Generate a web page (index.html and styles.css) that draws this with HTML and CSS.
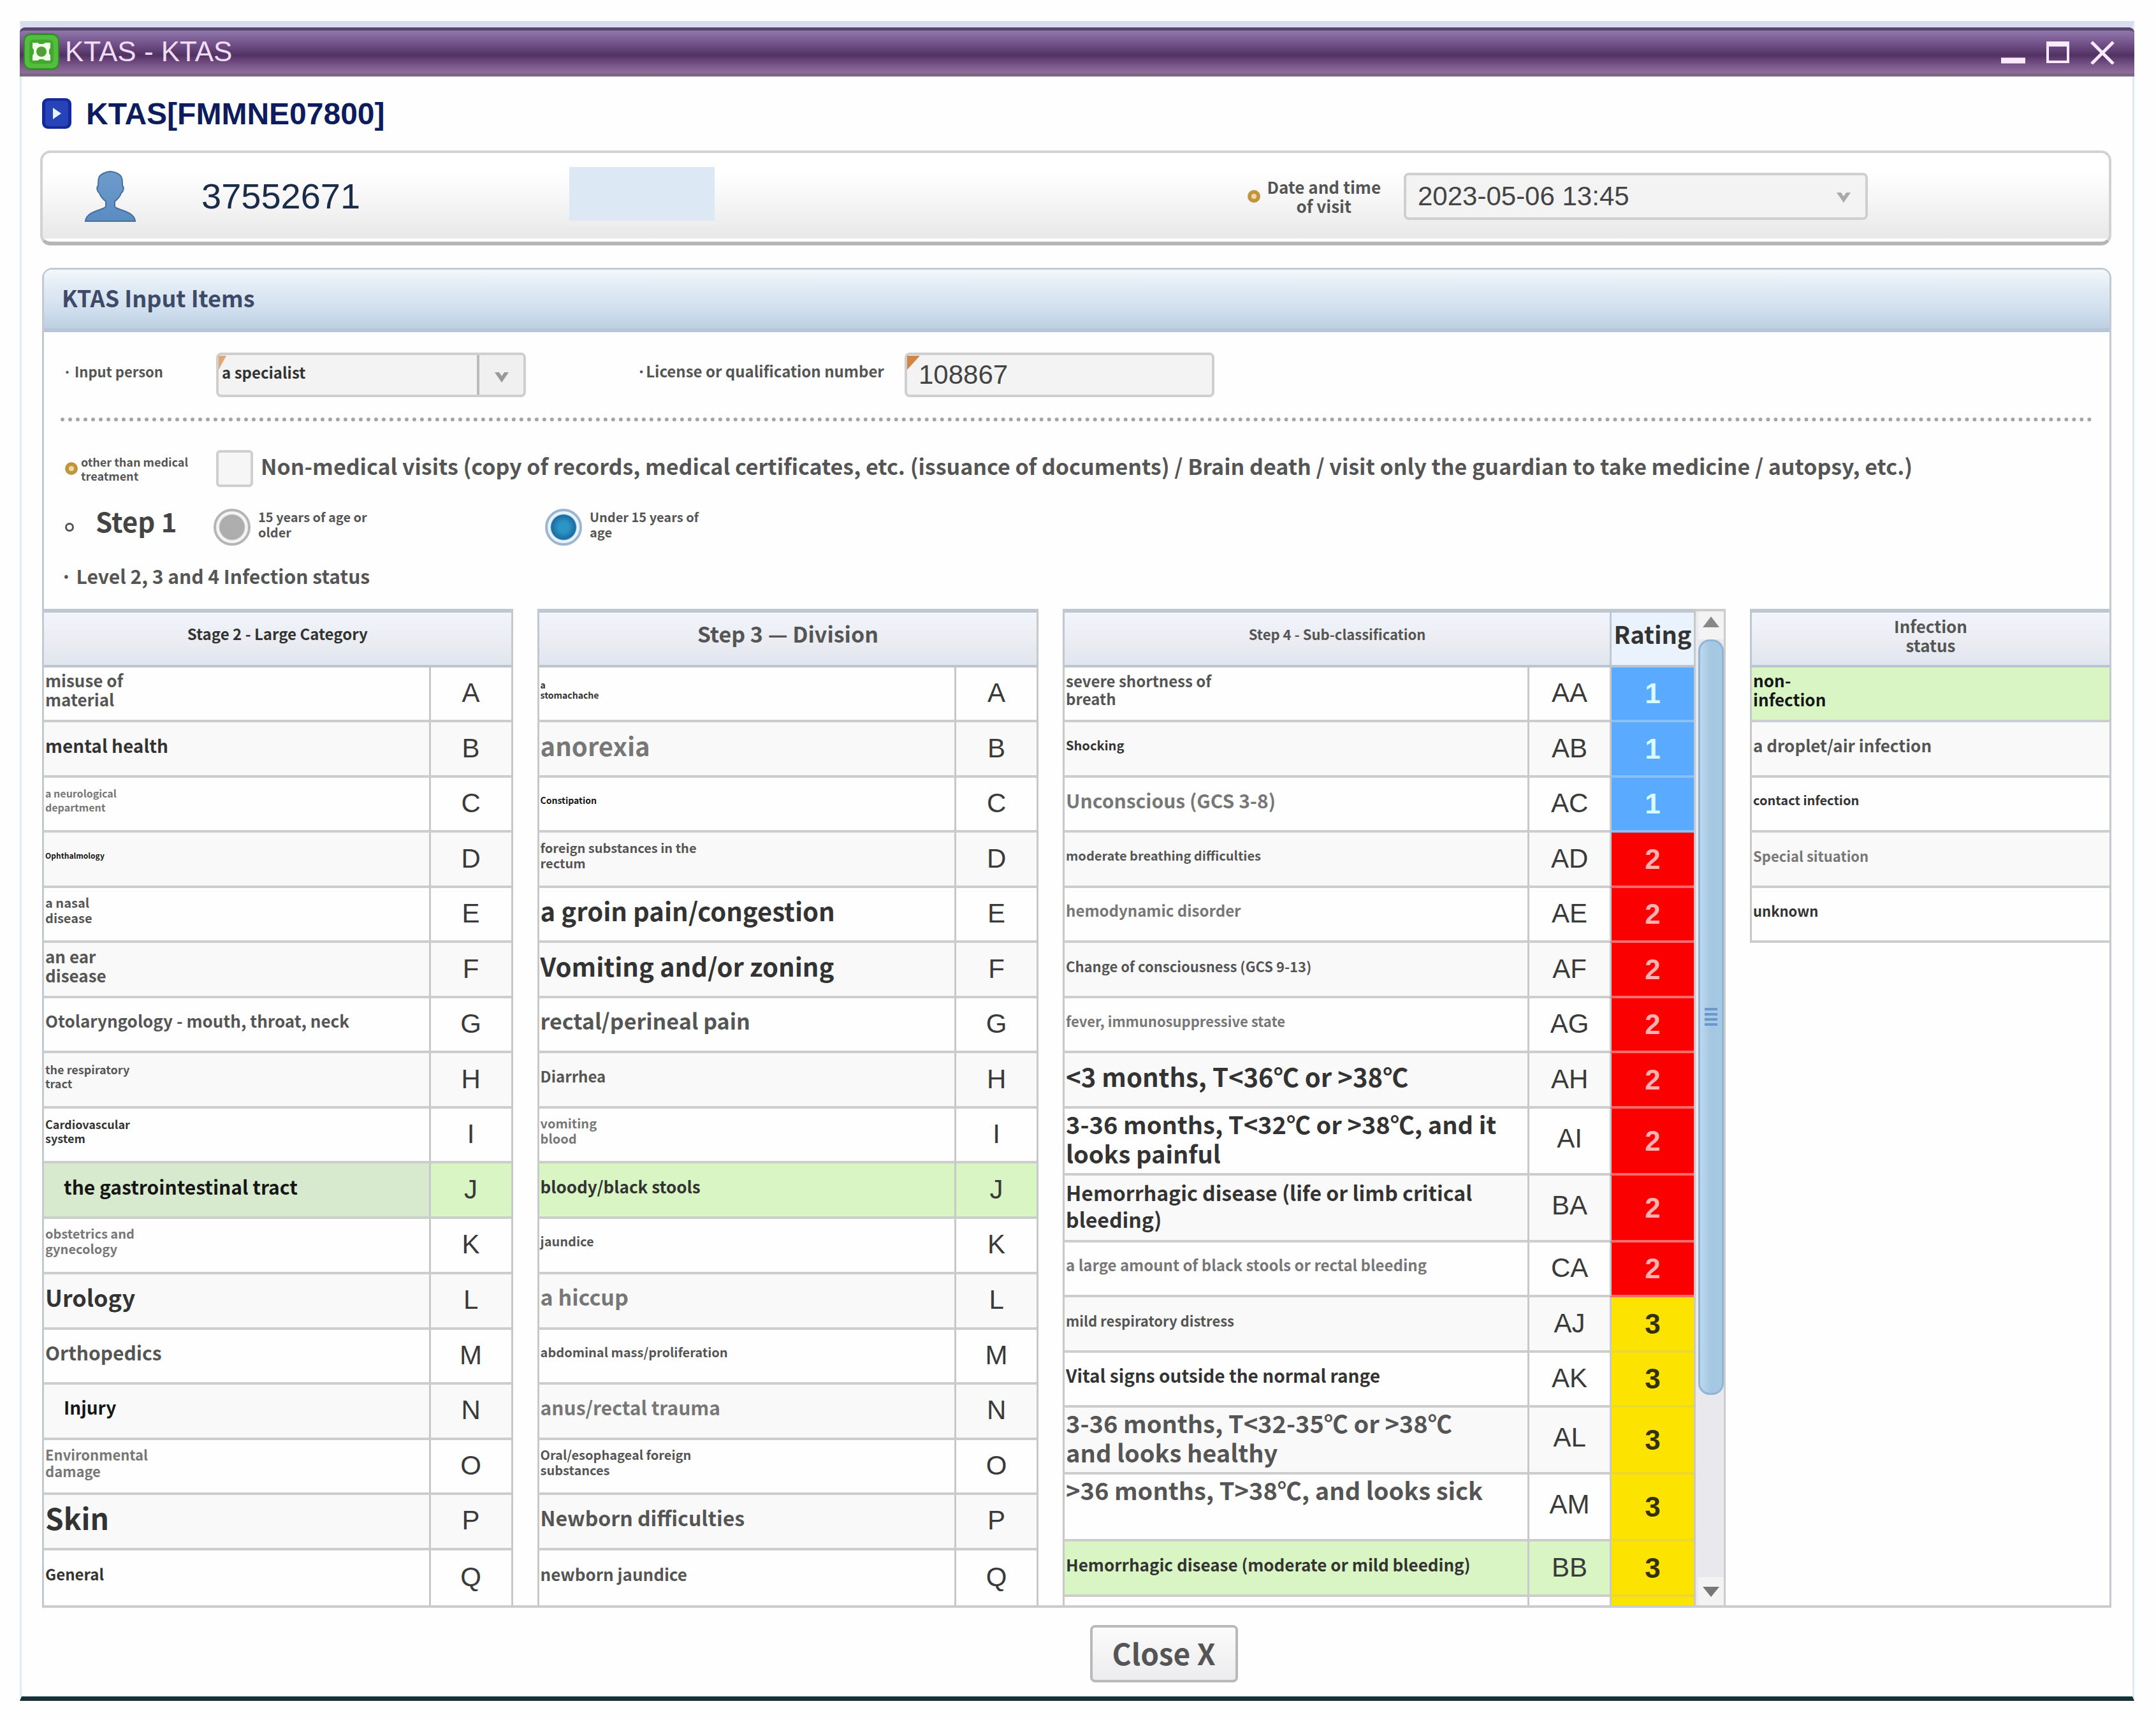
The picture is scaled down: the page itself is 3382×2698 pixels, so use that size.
FILE: index.html
```html
<!DOCTYPE html>
<html lang="en">
<head>
    <meta charset="UTF-8">
    <meta name="viewport" content="width=device-width, initial-scale=1.0">
    <title>KTAS - KTAS</title>
    <link rel="stylesheet" href="styles.css">
</head>
<body>
<div class="window">
    <!-- Title bar -->
    <header class="titlebar">
        <svg class="app-icon" viewBox="0 0 58 60">
            <rect x="1" y="1" width="56" height="58" rx="12" fill="#2f8f22"/>
            <rect x="3" y="4" width="52" height="52" rx="9" fill="#52bd3e"/>
            <rect x="10" y="11" width="38" height="38" rx="7" fill="#43a82f"/>
            <path d="M15 16h8l3 2h6l3-2h8v8l-2 3v6l2 3v8h-8l-3-2h-6l-3 2h-8v-8l2-3v-6l-2-3z" fill="#f2ffe9"/>
            <circle cx="29" cy="30" r="8" fill="#43a82f"/>
            <circle cx="29" cy="30" r="4" fill="#6b8f4a"/>
        </svg>
        <span class="titlebar-text">KTAS - KTAS</span>
        <div class="window-buttons">
            <button type="button" aria-label="Minimize"><svg viewBox="0 0 40 40"><path d="M1 34h38" stroke="#fbeaff" stroke-width="9"/></svg></button>
            <button type="button" aria-label="Maximize"><svg viewBox="0 0 40 40"><path d="M4 6v30h32V6" fill="none" stroke="#fbeaff" stroke-width="4"/><path d="M2 8h36" stroke="#fbeaff" stroke-width="8"/></svg></button>
            <button type="button" aria-label="Close"><svg viewBox="0 0 40 40"><path d="M3 5l34 34M37 5L3 39" stroke="#fbeaff" stroke-width="5"/></svg></button>
        </div>
    </header>

    <main class="content">
        <h1 class="page-title">
            <svg viewBox="0 0 48 50">
                <rect x="1" y="1" width="46" height="48" rx="9" fill="#16299b"/>
                <rect x="6" y="5" width="36" height="40" rx="5" fill="#2743b8"/>
                <path d="M18 16l13 9-13 9z" fill="#e6f4ff"/>
            </svg>
            KTAS[FMMNE07800]
        </h1>

        <!-- Patient bar -->
        <section class="patient">
            <svg class="person" viewBox="0 0 80 82">
                <defs>
                    <linearGradient id="skin" x1="0" y1="0" x2="0" y2="1">
                        <stop offset="0" stop-color="#6f9bcc"/>
                        <stop offset="1" stop-color="#5a8cc2"/>
                    </linearGradient>
                </defs>
                <path d="M40 2c-6 0-16 4-18 10-1 4-1 9-1 12-3 3-2 9 2 12 2 6 6 10 10 13v8c-3 6-29 6-32 22v1h78v-1c-3-16-29-16-32-22v-8c4-3 8-7 10-13 4-3 5-9 2-12 0-3 0-8-1-12C56 6 46 2 40 2z" fill="url(#skin)" stroke="#46719f" stroke-width="2"/>
            </svg>
            <span class="patient-id">37552671</span>
            <span class="patient-name"></span>
            <span class="ring"></span>
            <label class="visit-label" for="visit">Date and time<br>of visit</label>
            <span class="field visit-field">
                <select id="visit"><option>2023-05-06 13:45</option></select>
                <svg class="arrow" viewBox="0 0 24 20"><path d="M1 3h7l4 6 4-6h7L12 19z" fill="#aaa"/></svg>
            </span>
        </section>

        <section class="panel">
            <h2 class="panel-title">KTAS Input Items</h2>

            <div class="form">
                <div class="form-row person-row">
                    <label class="t22 row-label" for="inputPerson">· Input person</label>
                    <span class="field split required-thin">
                        <select class="t24" id="inputPerson"><option>a specialist</option></select>
                        <svg class="arrow" viewBox="0 0 24 20"><path d="M1 3h7l4 6 4-6h7L12 19z" fill="#999"/></svg>
                    </span>
                    <label class="t24 license-label" for="license">·License or qualification number</label>
                    <span class="field required">
                        <input type="text" id="license" value="108867">
                    </span>
                </div>

                <div class="form-row other-row">
                    <span class="row-label with-ring t18"><span class="ring"></span><span>other than medical<br>treatment</span></span>
                    <input type="checkbox" id="nonMedical">
                    <label class="t34" for="nonMedical">Non-medical visits (copy of records, medical certificates, etc. (issuance of documents) / Brain death / visit only the guardian to take medicine / autopsy, etc.)</label>
                </div>

                <div class="form-row step-row">
                    <span class="row-label with-ring"><span class="ring small"></span><span class="step-name">Step 1</span></span>
                    <span class="choice">
                        <input type="radio" name="age" id="age15">
                        <label class="t20" for="age15">15 years of age or<br>older</label>
                    </span>
                    <span class="choice">
                        <input type="radio" name="age" id="ageUnder" checked>
                        <label class="t20" for="ageUnder">Under 15 years of<br>age</label>
                    </span>
                </div>

                <p class="level-text t30">· Level 2, 3 and 4 Infection status</p>
            </div>

            <div class="tables">
                <!-- Stage 2 -->
                <table class="grid full first">
                    <colgroup><col><col class="code-col"></colgroup>
                    <thead><tr><th class="t24 dark" colspan="2">Stage 2 - Large Category</th></tr></thead>
                    <tbody>
                        <tr><td class="t26">misuse of<br>material</td><td class="code">A</td></tr>
                        <tr><td class="t28 dark">mental health</td><td class="code">B</td></tr>
                        <tr><td class="t16 light">a neurological<br>department</td><td class="code">C</td></tr>
                        <tr><td class="t12 black">Ophthalmology</td><td class="code">D</td></tr>
                        <tr><td class="t20">a nasal<br>disease</td><td class="code">E</td></tr>
                        <tr><td class="t26">an ear<br>disease</td><td class="code">F</td></tr>
                        <tr><td class="t26">Otolaryngology - mouth, throat, neck</td><td class="code">G</td></tr>
                        <tr><td class="t18">the respiratory<br>tract</td><td class="code">H</td></tr>
                        <tr><td class="t18 dark">Cardiovascular<br>system</td><td class="code">I</td></tr>
                        <tr class="picked"><td class="t30 black indent">the gastrointestinal tract</td><td class="code">J</td></tr>
                        <tr><td class="t20 light">obstetrics and<br>gynecology</td><td class="code">K</td></tr>
                        <tr><td class="t36 dark">Urology</td><td class="code">L</td></tr>
                        <tr><td class="t30">Orthopedics</td><td class="code">M</td></tr>
                        <tr><td class="t28 black indent">Injury</td><td class="code">N</td></tr>
                        <tr><td class="t22 light">Environmental<br>damage</td><td class="code">O</td></tr>
                        <tr><td class="t46 dark">Skin</td><td class="code">P</td></tr>
                        <tr><td class="t24 dark">General</td><td class="code">Q</td></tr>
                    </tbody>
                </table>

                <!-- Step 3 -->
                <table class="grid full">
                    <colgroup><col><col class="code-col"></colgroup>
                    <thead><tr><th class="t34" colspan="2">Step 3 — Division</th></tr></thead>
                    <tbody>
                        <tr><td class="t14 dark">a<br>stomachache</td><td class="code">A</td></tr>
                        <tr><td class="t40 light">anorexia</td><td class="code">B</td></tr>
                        <tr><td class="t14 black">Constipation</td><td class="code">C</td></tr>
                        <tr><td class="t20">foreign substances in the<br>rectum</td><td class="code">D</td></tr>
                        <tr><td class="t40 dark">a groin pain/congestion</td><td class="code">E</td></tr>
                        <tr><td class="t40 dark">Vomiting and/or zoning</td><td class="code">F</td></tr>
                        <tr><td class="t34">rectal/perineal pain</td><td class="code">G</td></tr>
                        <tr><td class="t24">Diarrhea</td><td class="code">H</td></tr>
                        <tr><td class="t20 light">vomiting<br>blood</td><td class="code">I</td></tr>
                        <tr class="picked"><td class="t26 dark">bloody/black stools</td><td class="code">J</td></tr>
                        <tr><td class="t20">jaundice</td><td class="code">K</td></tr>
                        <tr><td class="t34 light">a hiccup</td><td class="code">L</td></tr>
                        <tr><td class="t20">abdominal mass/proliferation</td><td class="code">M</td></tr>
                        <tr><td class="t30 light">anus/rectal trauma</td><td class="code">N</td></tr>
                        <tr><td class="t20">Oral/esophageal foreign<br>substances</td><td class="code">O</td></tr>
                        <tr><td class="t32">Newborn difficulties</td><td class="code">P</td></tr>
                        <tr><td class="t26">newborn jaundice</td><td class="code">Q</td></tr>
                    </tbody>
                </table>

                <!-- Step 4 with scrollbar -->
                <div class="scroll-box">
                    <table class="grid">
                        <colgroup><col><col class="code-col"><col class="rating-col"></colgroup>
                        <thead><tr><th class="t22" colspan="2">Step 4 - Sub-classification</th><th class="rating-head t38 dark">Rating</th></tr></thead>
                        <tbody>
                            <tr><td class="t24">severe shortness of<br>breath</td><td class="code">AA</td><td class="rate one">1</td></tr>
                            <tr><td class="t20 dark">Shocking</td><td class="code">AB</td><td class="rate one">1</td></tr>
                            <tr><td class="t30 light">Unconscious (GCS 3-8)</td><td class="code">AC</td><td class="rate one">1</td></tr>
                            <tr><td class="t20">moderate breathing difficulties</td><td class="code">AD</td><td class="rate two">2</td></tr>
                            <tr><td class="t24 light">hemodynamic disorder</td><td class="code">AE</td><td class="rate two">2</td></tr>
                            <tr><td class="t22">Change of consciousness (GCS 9-13)</td><td class="code">AF</td><td class="rate two">2</td></tr>
                            <tr><td class="t22 light">fever, immunosuppressive state</td><td class="code">AG</td><td class="rate two">2</td></tr>
                            <tr><td class="t40 dark">&lt;3 months, T&lt;36℃ or &gt;38℃</td><td class="code">AH</td><td class="rate two">2</td></tr>
                            <tr class="tall"><td class="t38 dark">3-36 months, T&lt;32℃ or &gt;38℃, and it<br>looks painful</td><td class="code">AI</td><td class="rate two">2</td></tr>
                            <tr class="tall"><td class="t32 dark">Hemorrhagic disease (life or limb critical<br>bleeding)</td><td class="code">BA</td><td class="rate two">2</td></tr>
                            <tr><td class="t24 light">a large amount of black stools or rectal bleeding</td><td class="code">CA</td><td class="rate two">2</td></tr>
                            <tr><td class="t22">mild respiratory distress</td><td class="code">AJ</td><td class="rate three">3</td></tr>
                            <tr><td class="t28 dark">Vital signs outside the normal range</td><td class="code">AK</td><td class="rate three">3</td></tr>
                            <tr class="tall"><td class="t38">3-36 months, T&lt;32-35℃ or &gt;38℃<br>and looks healthy</td><td class="code">AL</td><td class="rate three">3</td></tr>
                            <tr class="tall"><td class="t38 raised">&gt;36 months, T&gt;38℃, and looks sick</td><td class="code">AM</td><td class="rate three">3</td></tr>
                            <tr class="picked"><td class="t26 dark">Hemorrhagic disease (moderate or mild bleeding)</td><td class="code">BB</td><td class="rate three">3</td></tr>
                            <tr class="cut"><td></td><td></td><td class="rate three"></td></tr>
                        </tbody>
                    </table>
                    <div class="scrollbar">
                        <svg class="scroll-end" viewBox="0 0 40 44"><path d="M20 8l13 17H7z" fill="#888"/></svg>
                        <div class="thumb"><span class="grip"></span></div>
                        <svg class="scroll-end down" viewBox="0 0 40 44"><path d="M20 31L7 15h26z" fill="#777"/></svg>
                    </div>
                </div>

                <!-- Infection -->
                <div class="infection">
                    <table class="grid last">
                        <thead><tr><th class="t26">Infection<br>status</th></tr></thead>
                        <tbody>
                            <tr class="picked"><td class="t26 black">non-<br>infection</td></tr>
                            <tr><td class="t26">a droplet/air infection</td></tr>
                            <tr><td class="t20 dark">contact infection</td></tr>
                            <tr><td class="t22 light">Special situation</td></tr>
                            <tr><td class="t22 dark">unknown</td></tr>
                        </tbody>
                    </table>
                </div>
            </div>
        </section>

        <footer class="actions">
            <button type="button" class="close-button">Close X</button>
        </footer>
    </main>
</div>
</body>
</html>
```
FILE: styles.css
```css
* {
    box-sizing: border-box;
}

body {
    margin: 0;
    padding: 33px 34px 31px 31px;
    background: #fefefe;
    color: #555;
    font-family: "Noto Sans CJK KR", "Noto Sans", sans-serif;
    font-weight: 700;
}

h1, h2, p {
    margin: 0;
}

button, input, select {
    font-family: inherit;
    font-weight: inherit;
    color: inherit;
    margin: 0;
}

/* Text sizes */
.t12 { font-size: 12px; line-height: 16px; }
.t14 { font-size: 14px; line-height: 16px; }
.t16 { font-size: 16px; line-height: 22px; }
.t18 { font-size: 18px; line-height: 22px; }
.t20 { font-size: 20px; line-height: 24px; }
.t22 { font-size: 22px; line-height: 26px; }
.t24 { font-size: 24px; line-height: 28px; }
.t26 { font-size: 26px; line-height: 30px; }
.t28 { font-size: 28px; line-height: 32px; }
.t30 { font-size: 30px; line-height: 34px; }
.t32 { font-size: 32px; line-height: 42px; }
.t34 { font-size: 34px; line-height: 42px; }
.t36 { font-size: 36px; line-height: 44px; }
.t38 { font-size: 38px; line-height: 46px; }
.t40 { font-size: 40px; line-height: 46px; }
.t46 { font-size: 46px; line-height: 52px; }

.dark { color: #333; }
.black { color: #161616; }
.light { color: #777; }

/* Window frame */
.window {
    border: solid #dfeaf2;
    border-width: 0 3px;
    border-bottom: 7px solid #14303a;
    border-top: 10px solid #d9dcec;
}

.titlebar {
    display: flex;
    align-items: center;
    height: 77px;
    margin: 0 -3px;
    padding: 0 30px 2px 5px;
    border-top: 5px solid #57466f;
    border-bottom: 5px solid #7a6682;
    border-radius: 8px 8px 0 0;
    background: linear-gradient(#8f78ab, #74528a 30%, #523263 58%, #7b578c 82%, #8d7099);
}

.app-icon {
    width: 58px;
    height: 60px;
}

.titlebar-text {
    flex: 1;
    padding-left: 8px;
    font-family: "Liberation Sans", Arial, sans-serif;
    font-size: 44px;
    line-height: 50px;
    font-weight: 400;
    color: #f0dcf7;
}

.window-buttons {
    display: flex;
    gap: 30px;
}

.window-buttons button {
    width: 40px;
    height: 40px;
    padding: 0;
    border: 0;
    background: none;
}

.window-buttons svg {
    display: block;
}

.content {
    padding: 0 33px 22px 29px;
}

.page-title {
    display: flex;
    align-items: center;
    gap: 22px;
    height: 116px;
    padding-left: 2px;
    font-family: "Liberation Sans", Arial, sans-serif;
    font-size: 48px;
    color: #0d1c5c;
}

.page-title svg {
    width: 48px;
    height: 50px;
}

/* Patient bar */
.patient {
    display: flex;
    align-items: center;
    height: 149px;
    padding: 0 378px 4px 66px;
    border: 4px solid #d2d2d2;
    border-bottom: 6px solid #b5b5b5;
    border-radius: 16px;
    background: linear-gradient(#fff 20%, #f7f7f7 50%, #e8e8e8 96%, #fff 97%);
}

.person {
    width: 80px;
    height: 82px;
}

.patient-id {
    margin-left: 103px;
    font-family: "Liberation Sans", Arial, sans-serif;
    font-size: 56px;
    font-weight: 400;
    color: #1b2c48;
}

.patient-name {
    width: 228px;
    height: 84px;
    margin: 0 0 8px 328px;
    background: #dde8f5;
}

.ring {
    flex: none;
    width: 20px;
    height: 20px;
    border: 6px solid #c09540;
    border-radius: 50%;
    background: #f0d9a0;
}

.ring.small {
    width: 14px;
    height: 14px;
    border: 3px solid #555;
    background: #fff;
}

.patient .ring {
    margin-left: auto;
}

.visit-label {
    margin: 0 36px 0 10px;
    text-align: center;
    font-size: 26px;
    line-height: 30px;
}

/* Fields */
.field {
    position: relative;
    display: block;
    width: 486px;
    height: 70px;
}

.field select, .field input {
    display: block;
    width: 100%;
    height: 100%;
    border: 4px solid #cfcfcf;
    border-radius: 8px;
    background: #f4f3f4;
    appearance: none;
    outline: 0;
}

.field input, .visit-field select {
    padding: 0 18px;
    font-family: "Liberation Sans", Arial, sans-serif;
    font-size: 42px;
    font-weight: 400;
    color: #444;
}

.visit-field {
    width: 728px;
    height: 74px;
}

.split select {
    padding: 0 0 8px 5px;
    line-height: 44px;
    color: #333;
    background: linear-gradient(90deg, #f4f3f4 405px, #bbb 405px, #bbb 409px, #f0f0f0 409px);
}

.arrow {
    position: absolute;
    right: 26px;
    top: 28px;
    width: 24px;
    height: 20px;
}

/* Orange corner marks a required field */
.required::before, .required-thin::before {
    content: "";
    position: absolute;
    left: 4px;
    top: 5px;
    width: 20px;
    height: 22px;
    background: #cf8745;
    clip-path: polygon(0 0, 100% 0, 0 100%);
}

.required-thin::before {
    width: 12px;
    background: #e0a878;
}

/* Main panel */
.panel {
    margin: 35px 0 0 3px;
    border: 3px solid #c3c9cf;
    border-bottom: 4px solid #ccc;
    border-radius: 16px 16px 0 0;
}

.panel-title {
    height: 98px;
    padding: 0 28px;
    border-bottom: 6px solid #b4c6d8;
    border-radius: 12px 12px 0 0;
    background: linear-gradient(#f2f8fb, #dfe9f4 35%, #cfdeed 70%, #bccfe2);
    font-size: 36px;
    line-height: 86px;
    color: #3d4a68;
}

.form {
    padding: 0 26px;
}

.form-row {
    display: flex;
    align-items: center;
}

.row-label {
    width: 244px;
    flex: none;
}

.person-row {
    height: 140px;
    border-bottom: 6px dotted #a4a4a4;
}

.person-row label {
    padding-bottom: 12px;
}

.person-row .row-label {
    padding-left: 4px;
}

.license-label {
    width: 420px;
    margin-left: 174px;
}

.with-ring {
    display: flex;
    align-items: center;
    gap: 5px;
    padding-left: 7px;
}

.other-row {
    height: 148px;
}

.other-row label {
    padding: 0 0 8px 12px;
}

.form input[type="checkbox"] {
    flex: none;
    width: 58px;
    height: 58px;
    border: 4px solid #cfcfcf;
    border-radius: 6px;
    background: #f6f6f6;
    appearance: none;
}

.step-row {
    height: 36px;
}

.step-row .row-label {
    width: 240px;
}

.step-row .with-ring {
    gap: 34px;
}

.step-name {
    padding-bottom: 20px;
    font-size: 42px;
    line-height: 44px;
    color: #444;
}

.choice {
    display: flex;
    align-items: center;
    gap: 12px;
    width: 520px;
}

.choice label {
    padding-bottom: 8px;
}

.choice input {
    width: 58px;
    height: 58px;
    flex: none;
    border: 4px solid #b5b5b5;
    border-radius: 50%;
    background: radial-gradient(circle, #adadad 19px, #f4f4f4 21px);
    appearance: none;
}

.choice input:checked {
    border-color: #9db5cf;
    background: radial-gradient(circle, #2b95c6 8px, #1b6b9f 19px, #e6f4ff 21px);
}

.level-text {
    padding: 41px 0 35px;
}

/* Classification tables */
.tables {
    display: grid;
    grid-template-columns: 737fr 788fr 1042fr 565fr;
    gap: 38px;
}

.grid {
    width: 100%;
    table-layout: fixed;
    border-collapse: separate;
    border-spacing: 0;
    border-right: 3px solid #c6c8ca;
}

.code-col {
    width: 129px;
}

.rating-col {
    width: 132px;
}

.grid th {
    height: 92px;
    padding: 0 0 16px;
    border-top: 6px solid #bfc8d0;
    border-bottom: 4px solid #bcc5ce;
    border-left: 3px solid #bfc8d0;
    background: linear-gradient(#f1f5fd, #ebedf2 50%, #e0e5ee);
    white-space: nowrap;
}

.grid td {
    height: 86px;
    padding: 0 0 12px 2px;
    border-bottom: 4px solid #cdcdcd;
    border-left: 3px solid #c6c8ca;
    white-space: nowrap;
}

.grid tr:nth-child(even) td {
    height: 87px;
    background: #faf9fa;
}

/* The panel's own border closes these tables */
.full tbody tr:last-child td {
    border-bottom: 0;
}

.first th, .first td:first-child {
    border-left-width: 0;
}

.last {
    border-right: 0;
}

.last th {
    padding-bottom: 10px;
}

.grid td.code {
    padding: 0 0 2px;
    text-align: center;
    font-family: "Liberation Sans", Arial, sans-serif;
    font-size: 42px;
    font-weight: 400;
    line-height: 46px;
    color: #3a3a3a;
}

.grid td.indent {
    padding-left: 31px;
}

.grid tbody tr.picked td {
    background: #d8f5c3;
}

.grid tbody tr.picked td.indent {
    background: #d8eacd;
}

.grid tr.tall td {
    height: 105px;
    padding-bottom: 8px;
}

.grid tr.tall td.raised {
    padding-bottom: 54px;
}

.grid tbody tr.cut td {
    height: 13px;
    padding: 0;
    border-bottom: 0;
}

.grid th.rating-head {
    background: #eaf2fd;
}

.grid tbody tr td.rate {
    padding: 0;
    text-align: center;
    font-family: "Liberation Sans", Arial, sans-serif;
    font-size: 44px;
    font-weight: 700;
    line-height: 46px;
}

.grid tbody tr td.one {
    background: #5aabff;
    border-bottom-color: #88c0f8;
    color: #d8fbff;
}

.grid tbody tr td.two {
    background: #fb0000;
    border-bottom-color: #fb6a6a;
    color: #ffb0b0;
}

.grid tbody tr td.three {
    background: #fde400;
    border-bottom-color: #ecd92c;
    color: #33300a;
}

.scroll-box {
    display: flex;
}

/* Scrollbar */
.scrollbar {
    display: flex;
    flex-direction: column;
    flex: none;
    width: 47px;
    padding-left: 4px;
    border-top: 4px solid #ccc;
    border-right: 3px solid #ccc;
    background: #e9e9ed;
}

.scroll-end {
    width: 40px;
    height: 44px;
    background: #f3f3f3;
}

.scroll-end.down {
    margin-top: auto;
}

.thumb {
    display: flex;
    align-items: center;
    justify-content: center;
    height: 76%;
    border: 3px solid #8fb4d4;
    border-radius: 18px;
    background: linear-gradient(90deg, #bdd8ee, #a3c6e1 50%, #a6c9e4);
}

.grip {
    width: 20px;
    height: 28px;
    background: repeating-linear-gradient(#6a97cc 0 4px, #a6c9e4 4px 8px);
}

.infection {
    min-width: 0;
}

/* Bottom */
.actions {
    display: flex;
    justify-content: center;
    padding: 27px 0 0 276px;
}

.close-button {
    width: 232px;
    height: 90px;
    padding: 0 0 4px;
    border: 4px solid #b9b9b9;
    border-radius: 8px;
    background: linear-gradient(#fbfbfb, #ececee);
    font-size: 46px;
    line-height: 52px;
    color: #555;
}
```
